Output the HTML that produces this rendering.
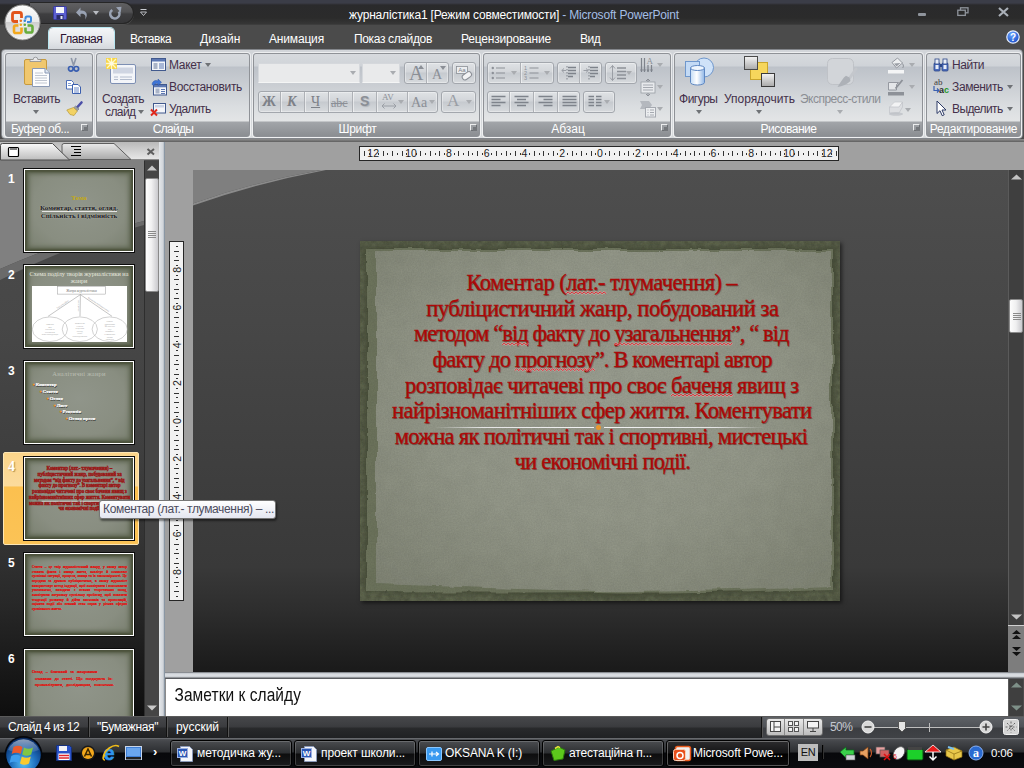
<!DOCTYPE html>
<html lang="ru"><head><meta charset="utf-8"><title>журналістика1 - Microsoft PowerPoint</title>
<style>
*{box-sizing:border-box;margin:0;padding:0}
html,body{width:1024px;height:768px;overflow:hidden;background:#4b4b4b;font-family:"Liberation Sans","DejaVu Sans",sans-serif;font-size:12px;color:#222}
.a{position:absolute}
svg{position:absolute;overflow:visible}
#app{position:absolute;left:0;top:0;width:1024px;height:768px;overflow:hidden;background:#4b4b4b}
/* title bar */
#tb{left:0;top:0;width:1024px;height:25px;background:linear-gradient(#3b3d48 0,#3b3d48 3px,#2a2a2c 5px,#2b2b2b 18px,#363636 24px,#444 25px)}
#qat{left:30px;top:2px;width:104px;height:22px;border-radius:0 11px 11px 0;background:linear-gradient(#606062,#525254 45%,#3e3e40 55%,#363638);border:1px solid #262626;border-left:none;box-shadow:0 1px 0 #4e4e4e}
#tabs{left:0;top:25px;width:1024px;height:24px;background:#4b4b4b}
.tab{position:absolute;top:32px;color:#fff;font-size:12px;line-height:15px;white-space:nowrap;letter-spacing:-.35px}
#tabA{left:49px;top:28px;width:65px;height:22px;border-radius:4px 4px 0 0;background:linear-gradient(#f4f6f8,#e4e7ea 60%,#d2d6db);box-shadow:0 0 0 1px #b7e6f0}
#title{left:349px;top:7.500px;color:#fff;font-size:12px;line-height:15px;white-space:nowrap;letter-spacing:-.18px}
/* ribbon */
#rb{left:1px;top:49px;width:1022px;height:90px;border-radius:4px;background:linear-gradient(#d3d6da,#c3c7cd 22%,#cfd3d7 60%,#d9dcde);border:1px solid #83868b}
.grp{position:absolute;top:53px;height:84px;border:1px solid #8f9297;border-radius:3px;background:linear-gradient(#d7dade 0,#cfd3d8 12px,#bdc2c9 13px,#c9cdd2 30px,#dadde0 52px,#e3e5e6 67px,#a2a5a9 68px,#8b8e92 100%);box-shadow:0 0 0 1px rgba(255,255,255,.6)}
.gl{position:absolute;left:0;right:0;bottom:0;height:15px;text-align:center;color:#fff;font-size:12px;line-height:16.5px;white-space:nowrap;letter-spacing:-.2px}
.rt{position:absolute;font-size:12px;color:#44304a;white-space:nowrap;line-height:14px;letter-spacing:-.25px}
.dis{color:#8b8e94}
.dd{position:absolute;width:0;height:0;border:3px solid transparent;border-top:4px solid #6f7276;border-bottom:none}
.ddl{border-top-color:#a9acb0}
.bt{position:absolute;border:1px solid #a3a7ad;border-radius:3px;background:linear-gradient(#dfe2e5,#d2d5d9 45%,#c6cacf 50%,#d7dadd);box-shadow:0 0 0 1px rgba(255,255,255,.35) inset}
.sep{position:absolute;width:1px;background:#aeb1b6;box-shadow:1px 0 0 rgba(255,255,255,.5)}
.ln{position:absolute;width:7px;height:7px;border:1px solid #eceded;border-right-color:#6d7074;border-bottom-color:#6d7074}
.ln:after{content:"";position:absolute;left:2px;top:2px;width:4px;height:4px;background:#74777b}
/* below ribbon */
#gap{left:0;top:139px;width:1024px;height:3px;background:linear-gradient(#8e8e8e,#5f5f5f)}
#main{left:165px;top:142px;width:859px;height:536px;background:#a0a0a0}
</style></head><body><div id="app">
<!--TITLE-->
<div class="a" id="tb"></div>
<div class="a" id="qat"></div>
<div class="a" id="tabs"></div>
<div class="a" id="title">журналістика1 [Режим совместимости] <span style="color:#a4bfe6">- Microsoft PowerPoint</span></div>
<div class="a" id="tabA"></div>
<div class="tab" style="left:60px;color:#2a1230;letter-spacing:-0.5px">Главная</div>
<div class="tab" style="left:130px;letter-spacing:-0.5px">Вставка</div>
<div class="tab" style="left:200px;letter-spacing:0px">Дизайн</div>
<div class="tab" style="left:269px;letter-spacing:-0.17px">Анимация</div>
<div class="tab" style="left:354px;letter-spacing:-0.36px">Показ слайдов</div>
<div class="tab" style="left:461px;letter-spacing:-0.19px">Рецензирование</div>
<div class="tab" style="left:580px;letter-spacing:-0.5px">Вид</div>
<!-- office button -->
<svg style="left:3px;top:3px" width="40" height="40" viewBox="0 0 40 40">
<defs><radialGradient id="ob" cx=".5" cy=".3" r=".75"><stop offset="0" stop-color="#ffffff"/><stop offset=".55" stop-color="#e8e8e8"/><stop offset="1" stop-color="#a8a8a8"/></radialGradient>
<linearGradient id="ob2" x1="0" y1="0" x2="0" y2="1"><stop offset="0" stop-color="#fdfdfd"/><stop offset=".48" stop-color="#e9e9e9"/><stop offset=".5" stop-color="#cfcfcf"/><stop offset="1" stop-color="#f4f4f4"/></linearGradient></defs>
<circle cx="19.500" cy="19.500" r="18.500" fill="#3a3a3a"/>
<circle cx="19.500" cy="19.500" r="17.500" fill="url(#ob2)" stroke="#8c8c8c" stroke-width="1"/>
<g fill="none" stroke-linejoin="round">
<rect x="9.500" y="9.500" width="9" height="9" rx="2" stroke="#e2541a" stroke-width="2.800"/>
<rect x="22.500" y="13.500" width="5.500" height="5.500" rx="1.500" stroke="#3c8ade" stroke-width="2"/>
<rect x="11" y="22.500" width="7.500" height="7.500" rx="1.800" stroke="#f2a81e" stroke-width="2.600"/>
<rect x="22.500" y="22.500" width="7" height="7" rx="1.800" stroke="#66ac3c" stroke-width="2.600"/>
</g>
<rect x="15" y="15" width="5" height="5" fill="#f0f0f0"/><rect x="20.500" y="16.500" width="3.500" height="4" fill="#eee"/><rect x="15.500" y="20.500" width="4.500" height="4" fill="#eee"/><rect x="20.500" y="20.500" width="4" height="4" fill="#eee"/>
<circle cx="17.800" cy="17.800" r="1.300" fill="#e8741f"/><circle cx="21.800" cy="17.800" r="1.300" fill="#3a86d8"/><circle cx="17.800" cy="21.800" r="1.300" fill="#f0a21c"/><circle cx="21.800" cy="21.800" r="1.300" fill="#62a83a"/>
</svg>
<!-- QAT icons -->
<svg style="left:53px;top:6px" width="14" height="14" viewBox="0 0 14 14"><rect x=".5" y=".5" width="13" height="13" rx="1" fill="#5b5ed0" stroke="#3a3c9c"/><rect x="3" y="1" width="8" height="6" fill="#f4f6fb"/><rect x="3.500" y="9" width="7" height="4.500" fill="#2a2c6a"/><rect x="7.500" y="10" width="2" height="3" fill="#e9ebf5"/></svg>
<svg style="left:75px;top:6px" width="15" height="14" viewBox="0 0 15 14"><path d="M1 6.500L5.500 1.500v3.200c5.500-.8 8.500 4 4.500 9 1.500-4-.5-6.500-4.500-5.700v3z" fill="#9aa3b4"/></svg>
<div class="dd" style="left:93px;top:11px;border-top-color:#b9bcc2"></div>
<svg style="left:108px;top:6px" width="14" height="14" viewBox="0 0 14 14"><path d="M10.800 5.500a4.600 4.600 0 1 1-6.500-1.500" stroke="#9aa3b4" stroke-width="2.600" fill="none"/><path d="M8 1.200l5.500-.5-.8 5.800z" fill="#9aa3b4"/></svg>
<svg style="left:140px;top:9px" width="7" height="8" viewBox="0 0 7 8"><path d="M.5.500h6" stroke="#c8cbd0"/><path d="M.5 3h6L3.500 6.500z" fill="none" stroke="#c8cbd0" stroke-width=".9"/></svg>
<!-- window controls -->
<div class="a" style="left:918px;top:13px;width:8px;height:3px;background:#8f949c;border-radius:1px"></div>
<svg style="left:957px;top:7px" width="12" height="10" viewBox="0 0 12 10"><rect x="3.500" y=".8" width="7.500" height="5" fill="none" stroke="#8f949c" stroke-width="1.300"/><rect x=".8" y="3.200" width="7.500" height="5.200" fill="#2b2b2b" stroke="#8f949c" stroke-width="1.300"/></svg>
<svg style="left:998px;top:7px" width="11" height="10" viewBox="0 0 11 10"><path d="M1 1l9 8M10 1L1 9" stroke="#aab0b8" stroke-width="2.200"/></svg>
<!-- help -->
<svg style="left:1005px;top:29px" width="16" height="16" viewBox="0 0 16 16"><defs><radialGradient id="hp" cx=".4" cy=".3" r=".8"><stop offset="0" stop-color="#6aa6ff"/><stop offset="1" stop-color="#1244c2"/></radialGradient></defs><circle cx="8" cy="8" r="6.200" fill="url(#hp)" stroke="#e6eefc" stroke-width="1.200"/><text x="8" y="11.500" text-anchor="middle" font-family="Liberation Sans,sans-serif" font-weight="bold" font-size="10" fill="#fff">?</text></svg>
<!--/TITLE2-->
<div class="a" id="rb"></div>
<!--RIBBON-->
<!-- group 1: clipboard -->
<div class="grp" style="left:5px;width:88px"><div class="gl" style="text-align:left;padding-left:5px;letter-spacing:-0.5px">Буфер об...</div><div class="ln" style="left:75px;top:70px"></div></div>
<svg style="left:23px;top:56px" width="30" height="34" viewBox="0 0 30 34">
 <rect x="1.5" y="3.5" width="22" height="25" rx="1.5" fill="#f0c76e" stroke="#c69a3e"/>
 <path d="M7 5.5h11v-2h-3.2a2.3 2.300 0 0 0-4.600 0H7z" fill="#e8e8ea" stroke="#8a8d92" stroke-width=".8"/>
 <path d="M9.500 12.500h12.500l4.500 4.500v13.500h-17z" fill="#fdfdfe" stroke="#8a99b4"/>
 <path d="M22 12.500v4.500h4.500" fill="#dfe6f2" stroke="#8a99b4"/>
 <path d="M12 17h8M12 19.500h12M12 22h12M12 24.500h12M12 27h12" stroke="#b9c0cc" stroke-width=".9"/>
</svg>
<div class="rt" style="left:13px;top:92px;letter-spacing:-0.48px">Вставить</div><div class="dd" style="left:33px;top:110px"></div>
<svg style="left:67px;top:57px" width="13" height="16" viewBox="0 0 13 16"><path d="M4.200 1l2.600 8M9 1L6.300 9" stroke="#8e97a8" stroke-width="1.600" fill="none"/><circle cx="3.800" cy="11.800" r="2.300" fill="none" stroke="#3a5fb0" stroke-width="1.700"/><circle cx="9.300" cy="11.800" r="2.300" fill="none" stroke="#3a5fb0" stroke-width="1.700"/></svg>
<svg style="left:66px;top:80px" width="16" height="14" viewBox="0 0 16 14"><path d="M.5.500h5l2 2v6.500h-7z" fill="#fff" stroke="#4d6fb8"/><path d="M2 3.500h3M2 5.500h4" stroke="#7f9ad0"/><path d="M6.500 4.500h5.500l2.500 2.500v6.500h-8z" fill="#fff" stroke="#3b5fae"/><path d="M8 8h5M8 10h5M8 12h5" stroke="#6b89c8"/></svg>
<svg style="left:66px;top:101px" width="17" height="16" viewBox="0 0 17 16"><path d="M15.500 1.500l-4.500 5" stroke="#4b4fa8" stroke-width="2.600" stroke-linecap="round"/><path d="M9.500 5l3.500 3-1.800 1.800-3.500-3z" fill="#9aa0a8" stroke="#6e7279" stroke-width=".6"/><path d="M7.500 6.500l3.800 3.500-3.300 4.500-4-1L.800 9z" fill="#f2d264" stroke="#b89a38" stroke-width=".7"/></svg>
<!-- group 2: slides -->
<div class="grp" style="left:96px;width:154px"><div class="gl" style="letter-spacing:-0.7px">Слайды</div></div>
<svg style="left:105px;top:57px" width="33" height="30" viewBox="0 0 33 30">
 <rect x="5.500" y="7.500" width="25" height="19" rx="1.500" fill="#f3f5f9" stroke="#7d8fb3"/>
 <rect x="8" y="10.500" width="20" height="6" fill="#cfd5e2"/><path d="M9 20h4M15 20h12M9 22.500h4M15 22.500h12" stroke="#b3bccd"/>
 <rect x="1" y="1" width="11" height="11" fill="#f7d548"/><path d="M6.500 1v11M1 6.500h11M2 2l9 9M11 2l-9 9" stroke="#fff8c8" stroke-width="1.300"/><circle cx="6.500" cy="6.500" r="2" fill="#fffbe0"/>
</svg>
<div class="rt" style="left:102px;top:92px;letter-spacing:-0.5px">Создать</div><div class="rt" style="left:105px;top:105px;letter-spacing:-0.6px">слайд</div><div class="dd" style="left:138px;top:110px"></div>
<svg style="left:151px;top:58px" width="15" height="14" viewBox="0 0 15 14"><rect x=".5" y=".5" width="14" height="12" fill="#f4f6fa" stroke="#41598d"/><rect x="1" y="1" width="13" height="2.500" fill="#5d78b3"/><rect x="2.500" y="5" width="4" height="6" fill="#aab4c8"/><path d="M8 6h5M8 8h5M8 10h5" stroke="#5d78b3"/></svg>
<div class="rt" style="left:169px;top:58px;letter-spacing:-0.3px">Макет</div><div class="dd" style="left:205px;top:63px"></div>
<svg style="left:151px;top:78px" width="16" height="18" viewBox="0 0 16 18"><rect x="2.500" y="6.500" width="13" height="10.500" fill="#f4f6fa" stroke="#41598d"/><rect x="3" y="7" width="12" height="2.300" fill="#5d78b3"/><rect x="4.500" y="10.500" width="4" height="5" fill="#aab4c8"/><path d="M10 11.500h4M10 13.500h4M10 15.500h4" stroke="#5d78b3"/><path d="M1 6.500c.5-3.500 3.500-5 6-3.500V1l3.500 3.300L7 7.500V5.700C5 5 3.500 5.500 3 7.500z" fill="#3f74d6" stroke="#2a54a8" stroke-width=".5"/></svg>
<div class="rt" style="left:169px;top:80px;letter-spacing:-0.32px">Восстановить</div>
<svg style="left:150px;top:103px" width="16" height="14" viewBox="0 0 16 14"><rect x="3.500" y=".5" width="12" height="9.500" fill="#f4f6fa" stroke="#41598d"/><rect x="5" y="2" width="9" height="2.500" fill="#c9d2e4"/><path d="M1 6.500l6 6M7 6.500l-6 6" stroke="#e0281c" stroke-width="2"/></svg>
<div class="rt" style="left:169px;top:102px;letter-spacing:-0.6px">Удалить</div>
<!-- group 3: font -->
<div class="grp" style="left:253px;width:227px"><div class="gl" style="letter-spacing:-0.3px;padding-right:18px">Шрифт</div><div class="ln" style="left:216px;top:70px"></div></div>
<div class="a" style="left:258px;top:63px;width:102px;height:20px;background:#e9eaeb;border:1px solid #d5d8dc;border-bottom-color:#f4f5f5"></div><div class="dd ddl" style="left:350px;top:71px"></div>
<div class="a" style="left:362px;top:63px;width:38px;height:20px;background:#e9eaeb;border:1px solid #d5d8dc;border-bottom-color:#f4f5f5"></div><div class="dd ddl" style="left:390px;top:71px"></div>
<div class="bt" style="left:404px;top:62px;width:45px;height:22px"></div><div class="sep" style="left:426px;top:63px;height:20px"></div>
<div class="a" style="left:409px;top:62px;font:20px/22px 'Liberation Serif',serif;color:#8b8f96">A</div><div class="a" style="left:432px;top:66px;font:14px/18px 'Liberation Serif',serif;color:#8b8f96">A</div>
<div class="dd" style="left:418px;top:65px;border-top:none;border-bottom:4px solid #8b8f96"></div><div class="dd" style="left:440px;top:66px;border-top-color:#8b8f96"></div>
<div class="bt" style="left:452px;top:62px;width:24px;height:22px"></div>
<svg style="left:455px;top:65px" width="18" height="16" viewBox="0 0 18 16"><rect x="1.500" y="1.500" width="11" height="7" fill="#eceef0" stroke="#8b8f96" stroke-width=".8"/><text x="3.200" y="7.300" font-family="Liberation Sans,sans-serif" font-size="6" fill="#7d8188">Aa</text><rect x="7" y="8" width="10" height="5.500" rx="2.500" transform="rotate(-35 12 11)" fill="#f3f3f4" stroke="#8b8f96"/></svg>
<div class="bt" style="left:258px;top:91px;width:180px;height:22px"></div>
<div class="sep" style="left:280px;top:92px;height:20px"></div><div class="sep" style="left:304px;top:92px;height:20px"></div><div class="sep" style="left:328px;top:92px;height:20px"></div><div class="sep" style="left:352px;top:92px;height:20px"></div><div class="sep" style="left:376px;top:92px;height:20px"></div><div class="sep" style="left:407px;top:92px;height:20px"></div>
<div class="a" style="left:262px;top:93px;font:bold 14px/18px 'Liberation Serif',serif;color:#7d8188">Ж</div>
<div class="a" style="left:287px;top:93px;font:italic bold 14px/18px 'Liberation Serif',serif;color:#7d8188">К</div>
<div class="a" style="left:311px;top:93px;font:14px/18px 'Liberation Serif',serif;color:#7d8188;text-decoration:underline">Ч</div>
<div class="a" style="left:331px;top:94px;font:12px/18px 'Liberation Serif',serif;color:#8b8f96;text-decoration:line-through">abc</div>
<div class="a" style="left:360px;top:92px;font:bold 14px/18px 'Liberation Sans',sans-serif;color:#8b8f96;text-shadow:1px 1px 1px #b0b3b8">S</div>
<div class="a" style="left:382px;top:93px;font:9px/9px 'Liberation Serif',serif;color:#8b8f96">AV</div>
<svg style="left:381px;top:103px" width="16" height="6" viewBox="0 0 16 6"><path d="M1 3h14M3.500.5L1 3l2.500 2.500M12.500.5L15 3l-2.500 2.500" stroke="#9a9ea5" fill="none"/></svg><div class="dd ddl" style="left:398px;top:100px"></div>
<div class="a" style="left:411px;top:94px;font:14px/18px 'Liberation Serif',serif;color:#8b8f96">Aa</div><div class="dd ddl" style="left:429px;top:100px"></div>
<div class="bt" style="left:441px;top:91px;width:35px;height:22px"></div>
<div class="a" style="left:447px;top:90px;font:17px/22px 'Liberation Serif',serif;color:#9a9ea5">A</div><div class="dd ddl" style="left:466px;top:100px"></div>
<!-- group 4: paragraph -->
<div class="grp" style="left:483px;width:188px"><div class="gl" style="letter-spacing:-0.03px;padding-right:18px">Абзац</div><div class="ln" style="left:177px;top:70px"></div></div>
<div class="bt" style="left:487px;top:62px;width:67px;height:22px"></div><div class="sep" style="left:520px;top:63px;height:20px"></div>
<svg style="left:491px;top:66px" width="16" height="14" viewBox="0 0 16 14"><path d="M5 2h9M5 7h9M5 12h9" stroke="#8d9198" stroke-width="1.200"/><circle cx="1.800" cy="2" r="1.200" fill="#8d9198"/><circle cx="1.800" cy="7" r="1.200" fill="#8d9198"/><circle cx="1.800" cy="12" r="1.200" fill="#8d9198"/></svg><div class="dd ddl" style="left:511px;top:71px"></div>
<svg style="left:524px;top:65px" width="16" height="16" viewBox="0 0 16 16"><path d="M5.500 3h9M5.500 8h9M5.500 13h9" stroke="#8d9198" stroke-width="1.200"/><text x="0" y="5" font-size="5.500" font-family="Liberation Sans,sans-serif" fill="#8d9198">1</text><text x="0" y="10" font-size="5.500" font-family="Liberation Sans,sans-serif" fill="#8d9198">2</text><text x="0" y="15" font-size="5.500" font-family="Liberation Sans,sans-serif" fill="#8d9198">3</text></svg><div class="dd ddl" style="left:544px;top:71px"></div>
<div class="bt" style="left:557px;top:62px;width:45px;height:22px"></div><div class="sep" style="left:579px;top:63px;height:20px"></div>
<svg style="left:561px;top:65px" width="16" height="16" viewBox="0 0 16 16"><path d="M7 2.500h8M7 5.500h8M7 8.500h8M7 11.500h5" stroke="#7e838b" stroke-width="1.400"/><path d="M6 1v14" stroke="#7e838b" stroke-dasharray="1.500 1.500"/><path d="M5 5.500H.8M3 3.500L.8 5.500 3 7.500" stroke="#9a9ea5" fill="none"/></svg>
<svg style="left:583px;top:65px" width="16" height="16" viewBox="0 0 16 16"><path d="M7 2.500h8M7 5.500h8M7 8.500h8M7 11.500h5" stroke="#7e838b" stroke-width="1.400"/><path d="M6 1v14" stroke="#7e838b" stroke-dasharray="1.500 1.500"/><path d="M.5 5.500H5M3 3.500l2.200 2L3 7.500" stroke="#9a9ea5" fill="none"/></svg>
<div class="bt" style="left:605px;top:62px;width:32px;height:22px"></div>
<svg style="left:609px;top:64px" width="18" height="18" viewBox="0 0 18 18"><path d="M8 4h9M8 7.500h9M8 11h9M8 14.500h9" stroke="#8d9198" stroke-width="1.300"/><path d="M3.500 1.500v15M1 4.500l2.500-3 2.500 3M1 13.500l2.500 3 2.500-3" stroke="#9a9ea5" fill="none"/></svg><div class="dd ddl" style="left:626px;top:71px"></div>
<div class="bt" style="left:487px;top:91px;width:93px;height:22px"></div><div class="sep" style="left:509px;top:92px;height:20px"></div><div class="sep" style="left:533px;top:92px;height:20px"></div><div class="sep" style="left:557px;top:92px;height:20px"></div>
<svg style="left:491px;top:95px" width="15" height="14" viewBox="0 0 15 14"><path d="M.5 1.500h14M.5 4.500h9M.5 7.500h14M.5 10.500h9" stroke="#7e838b" stroke-width="1.300"/></svg>
<svg style="left:514px;top:95px" width="15" height="14" viewBox="0 0 15 14"><path d="M.5 1.500h14M3 4.500h9M.5 7.500h14M3 10.500h9" stroke="#7e838b" stroke-width="1.300"/></svg>
<svg style="left:538px;top:95px" width="15" height="14" viewBox="0 0 15 14"><path d="M.5 1.500h14M5.500 4.500h9M.5 7.500h14M5.500 10.500h9" stroke="#7e838b" stroke-width="1.300"/></svg>
<svg style="left:562px;top:95px" width="15" height="14" viewBox="0 0 15 14"><path d="M.5 1.500h14M.5 4.500h14M.5 7.500h14M.5 10.500h14" stroke="#7e838b" stroke-width="1.300"/></svg>
<div class="bt" style="left:583px;top:91px;width:32px;height:22px"></div>
<svg style="left:588px;top:95px" width="14" height="14" viewBox="0 0 14 14"><path d="M.5 1.500h5.500M8 1.500h5.500M.5 4.500h5.500M8 4.500h5.500M.5 7.500h5.500M8 7.500h5.500M.5 10.500h5.500M8 10.500h5.500" stroke="#7e838b" stroke-width="1.300"/></svg><div class="dd ddl" style="left:604px;top:100px"></div>
<svg style="left:640px;top:56px" width="16" height="18" viewBox="0 0 16 18"><path d="M1.500 2v14M4.500 2v14M8 9v7M11.500 9v7" stroke="#7e838b" stroke-width="1.200"/><path d="M0 13.500l1.500 2.500L3 13.500zM3 13.500l1.500 2.500L6 13.500zM6.500 13.500L8 16l1.500-2.500zM10 13.500l1.500 2.500 1.500-2.500z" fill="#7e838b"/><text x="6.500" y="8" font-size="9" font-family="Liberation Serif,serif" fill="#8d9198">A</text></svg><div class="dd ddl" style="left:657px;top:63px"></div>
<svg style="left:640px;top:79px" width="16" height="17" viewBox="0 0 16 17"><rect x="1" y="3" width="14" height="11" fill="#e7e9ec" stroke="#9a9ea5" stroke-width=".8"/><path d="M3 6h10M3 8.500h10M3 11h10" stroke="#a5a9b0"/><path d="M8 0v3M6 2l2-2 2 2M8 17v-3M6 15l2 2 2-2" stroke="#8d9198" fill="none"/></svg><div class="dd ddl" style="left:657px;top:85px"></div>
<svg style="left:640px;top:101px" width="17" height="17" viewBox="0 0 17 17"><path d="M0 0h9l3 4-3 4H0l2-4z" fill="#b4b8be"/><rect x="5.500" y="6.500" width="10" height="9.500" fill="#eceef0" stroke="#a5a9b0"/><path d="M7.500 9h1M10 9h4M7.500 11.500h1M10 11.500h4M7.500 14h1M10 14h4" stroke="#a5a9b0"/></svg><div class="dd ddl" style="left:657px;top:107px"></div>
<!-- group 5: drawing -->
<div class="grp" style="left:674px;width:249px"><div class="gl" style="padding-right:20px;letter-spacing:-0.49px">Рисование</div><div class="ln" style="left:238px;top:70px"></div></div>
<svg style="left:684px;top:57px" width="31" height="30" viewBox="0 0 31 30"><defs><linearGradient id="cy" x1="0" x2="1"><stop offset="0" stop-color="#c4dcf6"/><stop offset=".45" stop-color="#fff"/><stop offset="1" stop-color="#8fb6e6"/></linearGradient></defs><circle cx="20" cy="10.500" r="9.500" fill="#cfe2f8" stroke="#6f97cc"/><rect x="1.500" y="4.500" width="14" height="15" fill="#c3daf5" stroke="#6f97cc"/><path d="M6.500 11v14.500a7 2.500 0 0 0 14 0V11z" fill="url(#cy)" stroke="#5f88c2"/><ellipse cx="13.500" cy="11" rx="7" ry="2.500" fill="#eef5fd" stroke="#5f88c2"/></svg>
<div class="rt" style="left:679px;top:92px;letter-spacing:-0.48px">Фигуры</div><div class="dd" style="left:696px;top:110px"></div>
<svg style="left:744px;top:56px" width="31" height="32" viewBox="0 0 31 32"><defs><linearGradient id="gq" x1="0" y1="0" x2="0" y2="1"><stop offset="0" stop-color="#f4f4f4"/><stop offset="1" stop-color="#a9a9a9"/></linearGradient></defs><rect x="6.500" y="6.500" width="17" height="17" fill="#f6d65c" stroke="#c9a52d"/><rect x=".5" y=".5" width="13" height="13" fill="url(#gq)" stroke="#4a4a4a"/><rect x="17.500" y="17.500" width="13" height="13" fill="url(#gq)" stroke="#3a3a3a"/></svg>
<div class="rt" style="left:724px;top:92px;letter-spacing:-0.04px">Упорядочить</div><div class="dd" style="left:756px;top:110px"></div>
<svg style="left:827px;top:58px" width="31" height="31" viewBox="0 0 31 31"><rect x=".5" y=".5" width="26" height="26" rx="5" fill="#d2d5d9" stroke="#bfc2c7"/><path d="M29 11L22 21" stroke="#c4c7cc" stroke-width="3" stroke-linecap="round"/><path d="M22.500 19.500l-3.500-1.800c-3 2-5 6-8.500 11.300 5-1 9.500-2.500 13-6z" fill="#adb1b7"/></svg>
<div class="rt dis" style="left:800px;top:92px;letter-spacing:-0.52px">Экспресс-стили</div><div class="dd ddl" style="left:837px;top:110px"></div>
<svg style="left:888px;top:57px" width="17" height="17" viewBox="0 0 17 17"><path d="M4 5.500L9.500 1l5 5-6 5z" fill="#eceef0" stroke="#8d9198" stroke-width=".9"/><path d="M6 6.500l6.500-.5-4 3.500z" fill="#9a9ea5"/><path d="M14.500 6.500c1.200 2 1.200 3.500 0 4.500" stroke="#8d9198" fill="none"/><rect x="0" y="13" width="16" height="3.500" fill="#f4f5f6"/></svg><div class="dd ddl" style="left:909px;top:63px"></div>
<svg style="left:888px;top:79px" width="17" height="17" viewBox="0 0 17 17"><path d="M.5 3.500h10l-2 2v5.500h-8z" fill="#e4e6e9" stroke="#8d9198" stroke-width=".9"/><path d="M14.500 1l-7 8.500" stroke="#8d9198" stroke-width="1.800"/><rect x="0" y="13" width="16" height="3.500" fill="#8d9198"/></svg><div class="dd ddl" style="left:909px;top:85px"></div>
<svg style="left:888px;top:100px" width="17" height="16" viewBox="0 0 17 16"><path d="M1.500 7l5-5h8l-3.500 6z" fill="#f2f3f4" stroke="#c4c7cc" stroke-width=".7"/><path d="M1.500 7h9.500l3.500-5v5l-3.500 6H1.500z" fill="#dcdee1" stroke="#c0c3c8" stroke-width=".7"/><ellipse cx="8" cy="14" rx="7" ry="1.800" fill="#b4b8be" opacity=".6"/></svg><div class="dd ddl" style="left:905px;top:108px"></div>
<!-- group 6: editing -->
<div class="grp" style="left:926px;width:95px"><div class="gl" style=";letter-spacing:-0.28px">Редактирование</div></div>
<svg style="left:933px;top:58px" width="16" height="14" viewBox="0 0 16 14"><rect x="1" y="5" width="6" height="8" rx="1" fill="#4c6dbd" stroke="#2c4688" stroke-width=".8"/><rect x="9" y="5" width="6" height="8" rx="1" fill="#4c6dbd" stroke="#2c4688" stroke-width=".8"/><rect x="2" y="1" width="4" height="5" fill="#e8edf7" stroke="#2c4688" stroke-width=".8"/><rect x="10" y="1" width="4" height="5" fill="#e8edf7" stroke="#2c4688" stroke-width=".8"/><rect x="2.500" y="7" width="3" height="4" fill="#e8edf7"/><rect x="10.500" y="7" width="3" height="4" fill="#e8edf7"/><rect x="7" y="6" width="2" height="3" fill="#2c4688"/></svg>
<div class="rt" style="left:952px;top:58px;letter-spacing:-0.45px">Найти</div>
<div class="a" style="left:934px;top:78px;font:9px/9px 'Liberation Serif',serif;color:#3b3b3b">ab</div><div class="a" style="left:939px;top:86px;font:bold 9px/9px 'Liberation Sans',sans-serif;color:#2a2a2a">a<span style="color:#1f9a2a">c</span></div>
<svg style="left:933px;top:86px" width="7" height="8" viewBox="0 0 7 8"><path d="M1 0v4.500h5M4 2.500l2 2-2 2" stroke="#3a5fb0" fill="none" stroke-width="1.200"/></svg>
<div class="rt" style="left:952px;top:80px;letter-spacing:-0.37px">Заменить</div><div class="dd" style="left:1007px;top:85px"></div>
<svg style="left:936px;top:100px" width="11" height="17" viewBox="0 0 11 17"><path d="M1 1v12.500l3-2.800 2.200 5 2-.9-2.200-4.800H10z" fill="#fff" stroke="#2c3a66" stroke-width="1"/></svg>
<div class="rt" style="left:952px;top:102px;letter-spacing:-0.6px">Выделить</div><div class="dd" style="left:1007px;top:107px"></div>
<!--/RIBBON-->
<div class="a" id="gap"></div>
<div class="a" id="main"></div>
<!--LEFT-->
<style>
#lp{left:0;top:160px;width:159px;height:556px;background:linear-gradient(#4c4c4c 0,#474747 30%,#3f3f3f 52%,#333 69%,#292929 79%,#1d1d1d 88%,#0e0e0e 100%);overflow:hidden}
#lph{left:0;top:142px;width:159px;height:18px;background:linear-gradient(#b9b9b9,#d9d9d9 70%,#e6e6e6);border-bottom:1px solid #8a8a8a}
.th{position:absolute;left:23px;width:112px;height:85px;border:1px solid #0c0c0c;background:#fff;padding:1px}
.th>div{position:relative;width:108px;height:81px;overflow:hidden;background:radial-gradient(ellipse at 50% 45%,#90958a 0,#898e81 60%,#787e6e 100%);box-shadow:inset 0 0 2px 2px #4b523b,inset 0 0 4px 4px #5e6550}
.tn{position:absolute;left:8px;color:#fff;font-weight:bold;font-size:12px;line-height:14px}
.tt{position:absolute;left:0;width:108px;text-align:center;white-space:nowrap;font-family:"Liberation Serif",serif}
#lsb{left:144px;top:161px;width:15px;height:555px;background:#454545;border-left:1px solid #2e2e2e}
#spl{left:159px;top:142px;width:6px;height:574px;background:linear-gradient(90deg,#e4e7ea,#d0d4d9 70%,#6f7f8f)}
.s4{-webkit-text-stroke:1.600px #9a1414!important;color:#9a1414!important;text-shadow:none!important}
</style>
<div class="a" id="lp">
<svg style="left:0;top:0" width="144" height="130" viewBox="0 0 144 130"><path d="M0 0h144v61Q70 78 0 109z" fill="#808080"/><path d="M0 109Q70 78 144 61v4Q72 84 0 120z" fill="#6a6a6a"/></svg>
</div>
<div class="a" id="lph"></div>
<svg style="left:0;top:142px" width="159" height="18" viewBox="0 0 159 18">
<defs><linearGradient id="pt" x1="0" y1="0" x2="0" y2="1"><stop offset="0" stop-color="#fafafa"/><stop offset="1" stop-color="#bdbdbd"/></linearGradient><linearGradient id="pt2" x1="0" y1="0" x2="0" y2="1"><stop offset="0" stop-color="#e9e9e9"/><stop offset="1" stop-color="#a9a9a9"/></linearGradient></defs>
<path d="M62 17.500V3.500q0-2 2-2h50l17 16z" fill="url(#pt2)" stroke="#5e5e5e"/>
<path d="M.5 18V3.500q0-2 2-2h50l17 16.500z" fill="url(#pt)" stroke="#4a4a4a"/>
<rect x="8.500" y="5.500" width="10" height="9" rx="1" fill="#fff" stroke="#000" stroke-width="1.200"/><path d="M10 7h7" stroke="#000"/>
<path d="M71 4.500h10M74 7.500h7M74 10.500h7M71 13.500h10" stroke="#000" stroke-width="1.200"/>
<path d="M147.500 7l6.500 5.500M154 7l-6.500 5.500" stroke="#5e5e5e" stroke-width="2"/>
</svg>
<!-- selected highlight -->
<div class="a" style="left:3px;top:452px;width:136px;height:93px;border-radius:2px;background:linear-gradient(#fcd58a,#fbdb9c 36%,#fbc04f 37.500%,#fbc356 100%);border:1px solid #fde6b4"></div>
<div class="tn" style="top:172px">1</div><div class="tn" style="top:268px">2</div><div class="tn" style="top:364px">3</div><div class="tn" style="top:459px;font:bold 14px/15px 'Liberation Serif',serif;text-shadow:1px 1px 1px rgba(120,80,0,.5)">4</div><div class="tn" style="top:556px">5</div><div class="tn" style="top:652px">6</div>
<div class="th" style="top:168px"><div>
 <div class="tt" style="top:24px;font-size:7px;line-height:8px;font-weight:bold;color:#c4aa14">Тема</div>
 <div class="tt" style="top:33.500px;font-size:7px;line-height:8px;font-weight:bold;color:#161616;text-shadow:0 0 1px #d8d8d8">Коментар, стаття, огляд.</div>
 <div class="a" style="left:17px;top:41px;width:75px;height:1px;background:#e4e4e4"></div>
 <div class="tt" style="top:42px;font-size:7px;line-height:8px;font-weight:bold;color:#161616;text-shadow:0 0 1px #d8d8d8">Спільність і відмінність</div>
</div></div>
<div class="th" style="top:264px"><div>
 <div class="tt" style="top:4px;font-size:6.200px;line-height:8px;color:#e6e8de">Схема поділу творів журналістики на</div>
 <div class="tt" style="top:11px;font-size:6.200px;line-height:8px;color:#e6e8de">жанри</div>
 <div class="a" style="left:7px;top:20px;width:95px;height:56px;background:#fff"></div>
 <svg style="left:7px;top:20px" width="95" height="56" viewBox="0 0 95 56"><rect x="25.300" y=".6" width="48.300" height="7.500" fill="none" stroke="#9a9a9a" stroke-width=".5"/><text x="49.500" y="5.600" font-size="3.400" text-anchor="middle" fill="#777" font-family="Liberation Serif,serif">Жанри журналістики</text><path d="M48.400 8.600L16.100 30.300M48.400 8.600L48 30.300M48.400 8.600L80 30.300" stroke="#8a8a8a" stroke-width=".5"/><ellipse cx="17.900" cy="43.200" rx="17.600" ry="12.300" fill="none" stroke="#a4a4a4" stroke-width=".5"/><ellipse cx="47.800" cy="43.200" rx="17.600" ry="12.300" fill="none" stroke="#a4a4a4" stroke-width=".5"/><ellipse cx="77.700" cy="43.200" rx="17.600" ry="12.300" fill="none" stroke="#a4a4a4" stroke-width=".5"/>
 <text transform="translate(31 19) rotate(-34)" font-size="2.400" text-anchor="middle" fill="#999" font-family="Liberation Serif,serif">Інформаційні</text><text transform="translate(46.500 20) rotate(-90)" font-size="2.400" text-anchor="middle" fill="#999" font-family="Liberation Serif,serif">Аналітичні</text><text transform="translate(66 19) rotate(34)" font-size="2.400" text-anchor="middle" fill="#999" font-family="Liberation Serif,serif">Художньо-публіцистичні</text>
 <text x="17.9" y="39.0" font-size="2.400" text-anchor="middle" fill="#999" font-family="Liberation Serif,serif">Замітка</text><text x="17.9" y="41.6" font-size="2.400" text-anchor="middle" fill="#999" font-family="Liberation Serif,serif">Звіт</text><text x="17.9" y="44.2" font-size="2.400" text-anchor="middle" fill="#999" font-family="Liberation Serif,serif">Інтерв’ю</text><text x="17.9" y="46.8" font-size="2.400" text-anchor="middle" fill="#999" font-family="Liberation Serif,serif">Репортаж</text><text x="17.9" y="49.4" font-size="2.400" text-anchor="middle" fill="#999" font-family="Liberation Serif,serif">Кореспонденція</text><text x="47.8" y="38.0" font-size="2.400" text-anchor="middle" fill="#999" font-family="Liberation Serif,serif">Коментар</text><text x="47.8" y="40.6" font-size="2.400" text-anchor="middle" fill="#999" font-family="Liberation Serif,serif">Стаття</text><text x="47.8" y="43.2" font-size="2.400" text-anchor="middle" fill="#999" font-family="Liberation Serif,serif">Рецензія</text><text x="47.8" y="45.8" font-size="2.400" text-anchor="middle" fill="#999" font-family="Liberation Serif,serif">Огляд</text><text x="47.8" y="48.4" font-size="2.400" text-anchor="middle" fill="#999" font-family="Liberation Serif,serif">Лист</text><text x="47.8" y="51.0" font-size="2.400" text-anchor="middle" fill="#999" font-family="Liberation Serif,serif">Розслідування</text><text x="77.7" y="36.0" font-size="2.400" text-anchor="middle" fill="#999" font-family="Liberation Serif,serif">Нарис</text><text x="77.7" y="38.6" font-size="2.400" text-anchor="middle" fill="#999" font-family="Liberation Serif,serif">Зарисовка</text><text x="77.7" y="41.2" font-size="2.400" text-anchor="middle" fill="#999" font-family="Liberation Serif,serif">Фейлетон</text><text x="77.7" y="43.8" font-size="2.400" text-anchor="middle" fill="#999" font-family="Liberation Serif,serif">Есе</text><text x="77.7" y="46.4" font-size="2.400" text-anchor="middle" fill="#999" font-family="Liberation Serif,serif">Памфлет</text><text x="77.7" y="49.0" font-size="2.400" text-anchor="middle" fill="#999" font-family="Liberation Serif,serif">Гумореска</text><text x="77.7" y="51.6" font-size="2.400" text-anchor="middle" fill="#999" font-family="Liberation Serif,serif">Байка</text><text x="77.7" y="54.2" font-size="2.400" text-anchor="middle" fill="#999" font-family="Liberation Serif,serif">Пародія</text>
 </svg>
</div></div>
<div class="th" style="top:360px"><div>
 <div class="tt" style="top:8px;font-size:6.500px;color:#b9bdb1;letter-spacing:.2px">Аналітичні жанри</div>
 <div class="a" style="left:8px;top:20px;font:bold 4.700px/5px 'Liberation Serif',serif;color:#fff;-webkit-text-stroke:.2px #fff;text-shadow:.5px .5px .5px #333;white-space:nowrap"><span style="color:#f0962a;-webkit-text-stroke:.5px #f0962a">▪</span>&nbsp;Коментар</div>
 <div class="a" style="left:15px;top:27px;font:bold 4.700px/5px 'Liberation Serif',serif;color:#fff;-webkit-text-stroke:.2px #fff;text-shadow:.5px .5px .5px #333;white-space:nowrap"><span style="color:#f0962a;-webkit-text-stroke:.5px #f0962a">▪</span>&nbsp;Стаття</div>
 <div class="a" style="left:22px;top:34px;font:bold 4.700px/5px 'Liberation Serif',serif;color:#fff;-webkit-text-stroke:.2px #fff;text-shadow:.5px .5px .5px #333;white-space:nowrap"><span style="color:#f0962a;-webkit-text-stroke:.5px #f0962a">▪</span>&nbsp;Огляд</div>
 <div class="a" style="left:29px;top:41px;font:bold 4.700px/5px 'Liberation Serif',serif;color:#fff;-webkit-text-stroke:.2px #fff;text-shadow:.5px .5px .5px #333;white-space:nowrap"><span style="color:#f0962a;-webkit-text-stroke:.5px #f0962a">▪</span>&nbsp;Лист</div>
 <div class="a" style="left:35px;top:47px;font:bold 4.700px/5px 'Liberation Serif',serif;color:#fff;-webkit-text-stroke:.2px #fff;text-shadow:.5px .5px .5px #333;white-space:nowrap"><span style="color:#f0962a;-webkit-text-stroke:.5px #f0962a">▪</span>&nbsp;Рецензія</div>
 <div class="a" style="left:41px;top:54px;font:bold 4.700px/5px 'Liberation Serif',serif;color:#fff;-webkit-text-stroke:.2px #fff;text-shadow:.5px .5px .5px #333;white-space:nowrap"><span style="color:#f0962a;-webkit-text-stroke:.5px #f0962a">▪</span>&nbsp;Огляд преси</div>
</div></div>
<div class="th" style="top:456px"><div>
<div class="a" style="left:0;top:0;width:480px;height:360px;transform:translateY(1px) scale(.225);transform-origin:0 0;font-weight:bold">
<div class="sl s4" style="left:6.6px;width:470.4px;top:29.2px;letter-spacing:-0.596px">Коментар (<span>лат.-</span> тлумачення) –</div>
<div class="sl s4" style="left:-33.8px;width:552.3px;top:54.8px;letter-spacing:-0.444px">публіцистичний жанр, побудований за</div>
<div class="sl s4" style="left:-46.0px;width:574.5px;top:80.4px;letter-spacing:-0.918px">методом “<span>від</span> факту до <span>узагальнення</span>”, “ від</div>
<div class="sl s4" style="left:-27.4px;width:539.1px;top:106.0px;letter-spacing:-0.853px">факту до <span>прогнозу</span>”. В коментарі автор</div>
<div class="sl s4" style="left:-55.0px;width:593.6px;top:131.6px;letter-spacing:-0.546px">розповідає читачеві про своє <span>баченя</span> явищ з</div>
<div class="sl s4" style="left:-68.0px;width:619.6px;top:157.2px;letter-spacing:-0.574px">найрізноманітніших сфер життя. Коментувати</div>
<div class="sl s4" style="left:-65.3px;width:612.7px;top:182.8px;letter-spacing:-0.673px">можна як політичні так і спортивні, мистецькі</div>
<div class="sl s4" style="left:54.6px;width:375.4px;top:208.4px;letter-spacing:-0.769px">чи економічні події.</div>
<div class="a" style="left:74px;top:186px;width:160px;height:3px;background:#e8e8e8"></div><div class="a" style="left:244px;top:186px;width:160px;height:3px;background:#e8e8e8"></div></div>
</div></div>
<div class="th" style="top:552px"><div>
 <div class="tt" style="top:11px;font:3.700px/4.650px 'Liberation Serif',serif;color:#e40808;-webkit-text-stroke:.22px #e40808;white-space:normal;left:7px;width:95px;text-align:justify">Стаття – це твір журналістський жанру, у якому автор ставить факти і явища життя, аналізує й осмислює суспільні ситуації, процеси, явища та їх закономірності. Це передача за думкою публіцистична, в якому журналіст використовує метод індукції, щоб аналізувати і пояснювати узагальнено, виходячи з певних теоретичних засад, аналізуючи актуальну суспільну проблему, щоб показати тенденції розвитку й дійти висновків та пропозицій, оцінити події або певний стан справ у різних сферах суспільного життя.</div>
</div></div>
<div class="th" style="top:648px"><div>
 <div class="tt" style="top:19px;font:4.200px/6.600px 'Liberation Serif',serif;color:#e40808;-webkit-text-stroke:.22px #e40808;white-space:nowrap;left:7px;width:100px;text-align:left;word-spacing:2px">Огляд – близький за жанровими<br>&nbsp;ознаками до статті. Що поєднують їх:<br>&nbsp;проаналізувати, дослідницька, пояснення.</div>
</div></div>
<!-- left scrollbar -->
<div class="a" id="lsb"></div>
<div class="a" style="left:145px;top:178px;width:14px;height:114px;border-radius:2px;background:linear-gradient(90deg,#fdfdfd,#f1f1f2 45%,#c9c9cd);border:1px solid #8a8a8a"></div>
<svg style="left:148px;top:231px" width="8" height="9" viewBox="0 0 8 9"><path d="M0 .5h8M0 2.500h8M0 4.500h8M0 6.500h8" stroke="#8a8a8a"/></svg>
<svg style="left:147px;top:165px" width="10" height="6" viewBox="0 0 10 6"><path d="M0 5.500L5 .5l5 5z" fill="#c9c9c9"/></svg>
<svg style="left:147px;top:705px" width="10" height="6" viewBox="0 0 10 6"><path d="M0 .5L5 5.500l5-5z" fill="#c9c9c9"/></svg>
<div class="a" id="spl"></div>
<!--/LEFT-->
<!--WORK-->
<div class="a" style="left:359px;top:146px;width:480px;height:15px;background:#f2f2f2;border:1px solid #262626"></div>
<svg style="left:360px;top:146px" width="479" height="15" viewBox="0 0 479 15">
<text x="13.2" y="11" text-anchor="middle" font-family="Liberation Sans,sans-serif" font-size="10.500" fill="#222">12</text>
<text x="51.0" y="11" text-anchor="middle" font-family="Liberation Sans,sans-serif" font-size="10.500" fill="#222">10</text>
<text x="88.8" y="11" text-anchor="middle" font-family="Liberation Sans,sans-serif" font-size="10.500" fill="#222">8</text>
<text x="126.6" y="11" text-anchor="middle" font-family="Liberation Sans,sans-serif" font-size="10.500" fill="#222">6</text>
<text x="164.4" y="11" text-anchor="middle" font-family="Liberation Sans,sans-serif" font-size="10.500" fill="#222">4</text>
<text x="202.2" y="11" text-anchor="middle" font-family="Liberation Sans,sans-serif" font-size="10.500" fill="#222">2</text>
<text x="240.0" y="11" text-anchor="middle" font-family="Liberation Sans,sans-serif" font-size="10.500" fill="#222">0</text>
<text x="277.8" y="11" text-anchor="middle" font-family="Liberation Sans,sans-serif" font-size="10.500" fill="#222">2</text>
<text x="315.6" y="11" text-anchor="middle" font-family="Liberation Sans,sans-serif" font-size="10.500" fill="#222">4</text>
<text x="353.4" y="11" text-anchor="middle" font-family="Liberation Sans,sans-serif" font-size="10.500" fill="#222">6</text>
<text x="391.2" y="11" text-anchor="middle" font-family="Liberation Sans,sans-serif" font-size="10.500" fill="#222">8</text>
<text x="429.0" y="11" text-anchor="middle" font-family="Liberation Sans,sans-serif" font-size="10.500" fill="#222">10</text>
<text x="466.8" y="11" text-anchor="middle" font-family="Liberation Sans,sans-serif" font-size="10.500" fill="#222">12</text>
<path d="M4.5 5v5M23.5 5v5M32.5 5v5M42.5 5v5M60.5 5v5M70.5 5v5M79.5 5v5M98.5 5v5M108.5 5v5M117.5 5v5M136.5 5v5M146.5 5v5M155.5 5v5M174.5 5v5M183.5 5v5M193.5 5v5M212.5 5v5M221.5 5v5M231.5 5v5M249.5 5v5M259.5 5v5M268.5 5v5M287.5 5v5M297.5 5v5M306.5 5v5M325.5 5v5M334.5 5v5M344.5 5v5M363.5 5v5M372.5 5v5M382.5 5v5M401.5 5v5M410.5 5v5M420.5 5v5M438.5 5v5M448.5 5v5M457.5 5v5M476.5 5v5" stroke="#333" stroke-width="1"/><path d="M9.5 7v2M18.5 7v2M27.5 7v2M37.5 7v2M46.5 7v2M56.5 7v2M65.5 7v2M75.5 7v2M84.5 7v2M94.5 7v2M103.5 7v2M112.5 7v2M122.5 7v2M131.5 7v2M141.5 7v2M150.5 7v2M160.5 7v2M169.5 7v2M179.5 7v2M188.5 7v2M197.5 7v2M207.5 7v2M216.5 7v2M226.5 7v2M235.5 7v2M245.5 7v2M254.5 7v2M264.5 7v2M273.5 7v2M283.5 7v2M292.5 7v2M301.5 7v2M311.5 7v2M320.5 7v2M330.5 7v2M339.5 7v2M349.5 7v2M358.5 7v2M368.5 7v2M377.5 7v2M386.5 7v2M396.5 7v2M405.5 7v2M415.5 7v2M424.5 7v2M434.5 7v2M443.5 7v2M453.5 7v2M462.5 7v2M471.5 7v2" stroke="#333" stroke-width="1"/>
</svg>
<div class="a" style="left:169px;top:241px;width:15px;height:360px;background:#f2f2f2;border:1px solid #262626"></div>
<svg style="left:170px;top:241px" width="14" height="360" viewBox="0 0 14 360">
<text transform="translate(10.500 28.8) rotate(-90)" text-anchor="middle" font-family="Liberation Sans,sans-serif" font-size="10.500" fill="#222">8</text>
<text transform="translate(10.500 66.6) rotate(-90)" text-anchor="middle" font-family="Liberation Sans,sans-serif" font-size="10.500" fill="#222">6</text>
<text transform="translate(10.500 104.4) rotate(-90)" text-anchor="middle" font-family="Liberation Sans,sans-serif" font-size="10.500" fill="#222">4</text>
<text transform="translate(10.500 142.2) rotate(-90)" text-anchor="middle" font-family="Liberation Sans,sans-serif" font-size="10.500" fill="#222">2</text>
<text transform="translate(10.500 180.0) rotate(-90)" text-anchor="middle" font-family="Liberation Sans,sans-serif" font-size="10.500" fill="#222">0</text>
<text transform="translate(10.500 217.8) rotate(-90)" text-anchor="middle" font-family="Liberation Sans,sans-serif" font-size="10.500" fill="#222">2</text>
<text transform="translate(10.500 255.6) rotate(-90)" text-anchor="middle" font-family="Liberation Sans,sans-serif" font-size="10.500" fill="#222">4</text>
<text transform="translate(10.500 293.4) rotate(-90)" text-anchor="middle" font-family="Liberation Sans,sans-serif" font-size="10.500" fill="#222">6</text>
<text transform="translate(10.500 331.2) rotate(-90)" text-anchor="middle" font-family="Liberation Sans,sans-serif" font-size="10.500" fill="#222">8</text>
<path d="M4 10.5h5M4 19.5h5M4 38.5h5M4 48.5h5M4 57.5h5M4 76.5h5M4 86.5h5M4 95.5h5M4 114.5h5M4 123.5h5M4 133.5h5M4 152.5h5M4 161.5h5M4 171.5h5M4 189.5h5M4 199.5h5M4 208.5h5M4 227.5h5M4 237.5h5M4 246.5h5M4 265.5h5M4 274.5h5M4 284.5h5M4 303.5h5M4 312.5h5M4 322.5h5M4 341.5h5M4 350.5h5" stroke="#333" stroke-width="1"/><path d="M6 5.5h2M6 15.5h2M6 24.5h2M6 34.5h2M6 43.5h2M6 52.5h2M6 62.5h2M6 71.5h2M6 81.5h2M6 90.5h2M6 100.5h2M6 109.5h2M6 119.5h2M6 128.5h2M6 137.5h2M6 147.5h2M6 156.5h2M6 166.5h2M6 175.5h2M6 185.5h2M6 194.5h2M6 204.5h2M6 213.5h2M6 223.5h2M6 232.5h2M6 241.5h2M6 251.5h2M6 260.5h2M6 270.5h2M6 279.5h2M6 289.5h2M6 298.5h2M6 308.5h2M6 317.5h2M6 326.5h2M6 336.5h2M6 345.5h2M6 355.5h2" stroke="#333" stroke-width="1"/>
</svg>
<style>
#ws{left:193px;top:170px;width:815px;height:502px;background:linear-gradient(#4e4e4e 0,#474747 30%,#404040 55%,#393939 79%,#2d2d2d 88%,#202020 96%,#1a1a1a 100%);overflow:hidden}
#slide{left:360px;top:241px;width:480px;height:360px;background:#5c634b;box-shadow:2px 2px 4px rgba(0,0,0,.55);overflow:hidden}
.sl{position:absolute;text-align:center;font-family:"Liberation Serif",serif;font-size:22.500px;line-height:26px;color:#ac0808;text-shadow:.6px .8px .8px rgba(50,10,0,.5);white-space:nowrap;-webkit-text-stroke:.3px #ac0808}
.sq{text-decoration:none}
#rsb{left:1008px;top:170px;width:16px;height:502px;background:#3f3f3f;border-left:1px solid #5a5a5a;border-right:1px solid #4c4c4c}
</style>
<div class="a" id="ws">
<svg style="left:0;top:0" width="140" height="40" viewBox="0 0 140 40"><path d="M0 0h128Q60 12 0 33.500z" fill="#7f7f7f"/><path d="M0 33.500Q60 12 128 0h5Q62 13.500 0 35.500z" fill="#8b8b8b"/></svg>
</div>
<div class="a" id="slide">
<svg style="left:0;top:0" width="480" height="360" viewBox="0 0 480 360">
<defs>
<filter id="rough" x="-5%" y="-5%" width="110%" height="110%"><feTurbulence type="fractalNoise" baseFrequency=".03" numOctaves="4" seed="4" result="n"/><feDisplacementMap in="SourceGraphic" in2="n" scale="6" xChannelSelector="R" yChannelSelector="G"/></filter>
<filter id="rough2" x="-5%" y="-5%" width="110%" height="110%"><feTurbulence type="fractalNoise" baseFrequency=".03" numOctaves="4" seed="4" result="n"/><feDisplacementMap in="SourceGraphic" in2="n" scale="6" xChannelSelector="R" yChannelSelector="G"/><feGaussianBlur stdDeviation="2.500"/></filter>
<filter id="grain" x="0" y="0" width="100%" height="100%"><feTurbulence type="fractalNoise" baseFrequency=".7" numOctaves="3" seed="7"/><feColorMatrix values="0 0 0 0 0  0 0 0 0 0  0 0 0 0 0  0 0 0 .10 0"/></filter>
<filter id="grain2" x="0" y="0" width="100%" height="100%"><feTurbulence type="fractalNoise" baseFrequency=".06" numOctaves="3" seed="11"/><feColorMatrix values="0 0 0 0 0  0 0 0 0 0  0 0 0 0 0  0 0 0 .05 -.005"/></filter>
<filter id="grain3" x="0" y="0" width="100%" height="100%"><feTurbulence type="fractalNoise" baseFrequency=".18" numOctaves="3" seed="3"/><feColorMatrix values="0 0 0 0 0  0 0 0 0 0  0 0 0 0 0  0 0 0 .32 -.06"/></filter>
<radialGradient id="pg" cx=".5" cy=".42" r=".72"><stop offset="0" stop-color="#9fa395"/><stop offset=".55" stop-color="#989c8d"/><stop offset="1" stop-color="#858979"/></radialGradient>
</defs>
<rect width="480" height="360" fill="#646b52"/><rect width="480" height="360" filter="url(#grain3)"/>
<path d="M5 6H476V349Q300 357 240 355Q150 354 5 352Z" fill="#4a503b" filter="url(#rough2)"/>
<path d="M7 8H473V348Q300 353 240 351Q150 352 7 351Z" fill="#70775f" filter="url(#rough)"/>
<path d="M16 10H471V345Q300 351 240 350Q150 348 16 343Z" fill="url(#pg)" filter="url(#rough)"/>
<rect width="480" height="360" filter="url(#grain2)"/>
<rect width="480" height="360" filter="url(#grain)"/>
</svg>
</div>
<div class="a" style="left:434px;top:427px;width:160px;height:1px;background:linear-gradient(90deg,rgba(255,255,255,0),#e4e4e4 30%,#f2f2f2)"></div>
<div class="a" style="left:604px;top:427px;width:160px;height:1px;background:linear-gradient(270deg,rgba(255,255,255,0),#e4e4e4 30%,#f2f2f2)"></div>
<div class="a" style="left:596px;top:425px;width:5px;height:5px;border-radius:50%;background:#e8962e"></div>
<!--ST-->
<div class="sl" style="left:366.6px;width:470.4px;top:270.2px;letter-spacing:-0.596px">Коментар (<span class="sq">лат.-</span> тлумачення) –</div>
<div class="sl" style="left:326.2px;width:552.3px;top:295.8px;letter-spacing:-0.444px">публіцистичний жанр, побудований за</div>
<div class="sl" style="left:314.0px;width:574.5px;top:321.4px;letter-spacing:-0.918px">методом “<span class="sq">від</span> факту до <span class="sq">узагальнення</span>”, “ від</div>
<div class="sl" style="left:332.6px;width:539.1px;top:347.0px;letter-spacing:-0.853px">факту до <span class="sq">прогнозу</span>”. В коментарі автор</div>
<div class="sl" style="left:305.0px;width:593.6px;top:372.6px;letter-spacing:-0.546px">розповідає читачеві про своє <span class="sq">баченя</span> явищ з</div>
<div class="sl" style="left:292.0px;width:619.6px;top:398.2px;letter-spacing:-0.574px">найрізноманітніших сфер життя. Коментувати</div>
<div class="sl" style="left:294.7px;width:612.7px;top:423.8px;letter-spacing:-0.673px">можна як політичні так і спортивні, мистецькі</div>
<div class="sl" style="left:414.6px;width:375.4px;top:449.4px;letter-spacing:-0.769px">чи економічні події.</div>
<!--/ST-->
<!--SQ--><svg style="left:0;top:0" width="1024" height="768" viewBox="0 0 1024 768"><path d="M566.1 293.7L568.1 291.9L570.1 293.7L572.1 291.9L574.1 293.7L576.1 291.9L578.1 293.7L580.1 291.9L582.1 293.7L584.1 291.9L586.1 293.7L588.1 291.9L590.1 293.7L592.1 291.9L594.1 293.7L596.1 291.9L598.1 293.7L600.1 291.9L602.1 293.7L604.1 291.9L606.1 293.7M502.2 344.9L504.2 343.1L506.2 344.9L508.2 343.1L510.2 344.9L512.2 343.1L514.2 344.9L516.2 343.1L518.2 344.9L520.2 343.1L522.2 344.9L524.2 343.1L526.2 344.9L528.2 343.1M614.2 344.9L616.2 343.1L618.2 344.9L620.2 343.1L622.2 344.9L624.2 343.1L626.2 344.9L628.2 343.1L630.2 344.9L632.2 343.1L634.2 344.9L636.2 343.1L638.2 344.9L640.2 343.1L642.2 344.9L644.2 343.1L646.2 344.9L648.2 343.1L650.2 344.9L652.2 343.1L654.2 344.9L656.2 343.1L658.2 344.9L660.2 343.1L662.2 344.9L664.2 343.1L666.2 344.9L668.2 343.1L670.2 344.9L672.2 343.1L674.2 344.9L676.2 343.1L678.2 344.9L680.2 343.1L682.2 344.9L684.2 343.1L686.2 344.9L688.2 343.1L690.2 344.9L692.2 343.1L694.2 344.9L696.2 343.1L698.2 344.9L700.2 343.1L702.2 344.9L704.2 343.1L706.2 344.9L708.2 343.1L710.2 344.9L712.2 343.1L714.2 344.9L716.2 343.1L718.2 344.9L720.2 343.1L722.2 344.9L724.2 343.1L726.2 344.9L728.2 343.1L730.2 344.9L732.2 343.1M514.8 370.5L516.8 368.7L518.8 370.5L520.8 368.7L522.8 370.5L524.8 368.7L526.8 370.5L528.8 368.7L530.8 370.5L532.8 368.7L534.8 370.5L536.8 368.7L538.8 370.5L540.8 368.7L542.8 370.5L544.8 368.7L546.8 370.5L548.8 368.7L550.8 370.5L552.8 368.7L554.8 370.5L556.8 368.7L558.8 370.5L560.8 368.7L562.8 370.5L564.8 368.7L566.8 370.5L568.8 368.7L570.8 370.5L572.8 368.7L574.8 370.5L576.8 368.7L578.8 370.5L580.8 368.7L582.8 370.5L584.8 368.7L586.8 370.5L588.8 368.7L590.8 370.5L592.8 368.7L594.8 370.5M671.0 396.1L673.0 394.3L675.0 396.1L677.0 394.3L679.0 396.1L681.0 394.3L683.0 396.1L685.0 394.3L687.0 396.1L689.0 394.3L691.0 396.1L693.0 394.3L695.0 396.1L697.0 394.3L699.0 396.1L701.0 394.3L703.0 396.1L705.0 394.3L707.0 396.1L709.0 394.3L711.0 396.1L713.0 394.3L715.0 396.1L717.0 394.3L719.0 396.1L721.0 394.3L723.0 396.1L725.0 394.3L727.0 396.1L729.0 394.3L731.0 396.1L733.0 394.3" fill="none" stroke="#f2d0d0" stroke-width="1.800" opacity=".55"/><path d="M566.1 293.7L568.1 291.9L570.1 293.7L572.1 291.9L574.1 293.7L576.1 291.9L578.1 293.7L580.1 291.9L582.1 293.7L584.1 291.9L586.1 293.7L588.1 291.9L590.1 293.7L592.1 291.9L594.1 293.7L596.1 291.9L598.1 293.7L600.1 291.9L602.1 293.7L604.1 291.9L606.1 293.7M502.2 344.9L504.2 343.1L506.2 344.9L508.2 343.1L510.2 344.9L512.2 343.1L514.2 344.9L516.2 343.1L518.2 344.9L520.2 343.1L522.2 344.9L524.2 343.1L526.2 344.9L528.2 343.1M614.2 344.9L616.2 343.1L618.2 344.9L620.2 343.1L622.2 344.9L624.2 343.1L626.2 344.9L628.2 343.1L630.2 344.9L632.2 343.1L634.2 344.9L636.2 343.1L638.2 344.9L640.2 343.1L642.2 344.9L644.2 343.1L646.2 344.9L648.2 343.1L650.2 344.9L652.2 343.1L654.2 344.9L656.2 343.1L658.2 344.9L660.2 343.1L662.2 344.9L664.2 343.1L666.2 344.9L668.2 343.1L670.2 344.9L672.2 343.1L674.2 344.9L676.2 343.1L678.2 344.9L680.2 343.1L682.2 344.9L684.2 343.1L686.2 344.9L688.2 343.1L690.2 344.9L692.2 343.1L694.2 344.9L696.2 343.1L698.2 344.9L700.2 343.1L702.2 344.9L704.2 343.1L706.2 344.9L708.2 343.1L710.2 344.9L712.2 343.1L714.2 344.9L716.2 343.1L718.2 344.9L720.2 343.1L722.2 344.9L724.2 343.1L726.2 344.9L728.2 343.1L730.2 344.9L732.2 343.1M514.8 370.5L516.8 368.7L518.8 370.5L520.8 368.7L522.8 370.5L524.8 368.7L526.8 370.5L528.8 368.7L530.8 370.5L532.8 368.7L534.8 370.5L536.8 368.7L538.8 370.5L540.8 368.7L542.8 370.5L544.8 368.7L546.8 370.5L548.8 368.7L550.8 370.5L552.8 368.7L554.8 370.5L556.8 368.7L558.8 370.5L560.8 368.7L562.8 370.5L564.8 368.7L566.8 370.5L568.8 368.7L570.8 370.5L572.8 368.7L574.8 370.5L576.8 368.7L578.8 370.5L580.8 368.7L582.8 370.5L584.8 368.7L586.8 370.5L588.8 368.7L590.8 370.5L592.8 368.7L594.8 370.5M671.0 396.1L673.0 394.3L675.0 396.1L677.0 394.3L679.0 396.1L681.0 394.3L683.0 396.1L685.0 394.3L687.0 396.1L689.0 394.3L691.0 396.1L693.0 394.3L695.0 396.1L697.0 394.3L699.0 396.1L701.0 394.3L703.0 396.1L705.0 394.3L707.0 396.1L709.0 394.3L711.0 396.1L713.0 394.3L715.0 396.1L717.0 394.3L719.0 396.1L721.0 394.3L723.0 396.1L725.0 394.3L727.0 396.1L729.0 394.3L731.0 396.1L733.0 394.3" fill="none" stroke="#d8141c" stroke-width=".9"/></svg>
<!--/SQ-->
<!-- right scrollbar -->
<div class="a" id="rsb"></div>
<svg style="left:1011px;top:174px" width="11" height="6" viewBox="0 0 11 6"><path d="M0 5.500L5.500.5 11 5.500z" fill="#c4c4c4"/></svg>
<div class="a" style="left:1009px;top:299px;width:14px;height:34px;border-radius:2px;background:linear-gradient(90deg,#fdfdfd,#efeff0 50%,#c9c9cd);border:1px solid #8a8a8a"></div>
<svg style="left:1013px;top:313px" width="8" height="9" viewBox="0 0 8 9"><path d="M0 .5h8M0 2.500h8M0 4.500h8M0 6.500h8" stroke="#8a8a8a"/></svg>
<svg style="left:1011px;top:614px" width="11" height="6" viewBox="0 0 11 6"><path d="M0 .5L5.500 5.500 11 .5z" fill="#c4c4c4"/></svg>
<div class="a" style="left:1008px;top:625px;width:16px;height:47px;background:#7d7d7d;border-top:1px solid #d0d0d0"></div>
<svg style="left:1012px;top:630px" width="9" height="26" viewBox="0 0 9 26"><path d="M0 4L4.500 0 9 4zM0 9l4.500-4L9 9zM0 17l4.500 4L9 17zM0 22l4.500 4L9 22z" fill="#111"/></svg>
<!--/WORK-->
<!--BOTTOM-->
<style>
#nsep{left:165px;top:672px;width:859px;height:7px;background:linear-gradient(#6a6d72 0,#c9cdd2 1.500px,#dfe2e6 3px,#c9cdd2 5px,#5a5c60 6px,#5a5c60 7px)}
#notes{left:165px;top:679px;width:843px;height:37px;background:#fff;border-left:1px solid #8a8a8a}
#nsb{left:1008px;top:679px;width:16px;height:37px;background:#3f3f3f;border-left:1px solid #5a5a5a;border-right:1px solid #4c4c4c}
#sb{left:0;top:716px;width:1024px;height:22px;background:linear-gradient(#46474a 0,#3b3c3f 45%,#28292b 55%,#202123 100%);border-top:1px solid #5a5a5a}
.st{position:absolute;top:720px;color:#fff;font-size:12px;line-height:14px;white-space:nowrap;letter-spacing:-.2px}
.ss{position:absolute;top:717px;width:1px;height:20px;background:#111;box-shadow:1px 0 0 #555}
#tk{left:0;top:738px;width:1024px;height:30px;background:linear-gradient(#74767a 0,#4d4f53 1.500px,#45474b 3px,#2c2e31 14px,#07080b 15px,#0b0c0f 100%)}
.tkb{position:absolute;top:740px;height:27px;width:122px;border:1px solid #000;border-radius:3px;background:linear-gradient(#4a4c50,#2c2e31 48%,#0d0d0e 52%,#1a1b1d);box-shadow:inset 0 0 0 1px rgba(255,255,255,.18);color:#fff;font-size:12px;line-height:25px;padding-left:26px;white-space:nowrap;overflow:hidden;letter-spacing:-.15px}
</style>
<div class="a" id="nsep"></div>
<div class="a" id="notes"></div>
<div class="a" style="left:174.500px;top:687px;font-size:15.500px;line-height:18px;color:#111;white-space:nowrap;letter-spacing:.06px;transform:scaleY(1.15);transform-origin:0 14px">Заметки к слайду</div>
<div class="a" id="nsb"></div>
<svg style="left:1011px;top:682px" width="11" height="6" viewBox="0 0 11 6"><path d="M0 5.500L5.500.5 11 5.500z" fill="#7e9088"/></svg>
<svg style="left:1011px;top:705px" width="11" height="6" viewBox="0 0 11 6"><path d="M0 .5L5.500 5.500 11 .5z" fill="#7e9088"/></svg>
<div class="a" id="sb"></div>
<div class="st" style="left:8px;letter-spacing:-0.56px">Слайд 4 из 12</div><div class="ss" style="left:88px"></div>
<div class="st" style="left:97px;letter-spacing:-0.37px">"Бумажная"</div><div class="ss" style="left:166px"></div>
<div class="st" style="left:176px;letter-spacing:0px">русский</div><div class="ss" style="left:227px"></div>
<div class="a" style="left:762px;top:717px;width:262px;height:21px;background:linear-gradient(#5e6166 0,#505358 45%,#3c3e42 55%,#404246 100%)"></div><div class="ss" style="left:761px"></div>
<div class="a" style="left:766px;top:718px;width:57px;height:18px;border-radius:3px;background:linear-gradient(#e9e9e9,#bdbdbd);border:1px solid #6e6e6e"></div>
<div class="a" style="left:784px;top:719px;width:1px;height:16px;background:#8a8a8a"></div><div class="a" style="left:803px;top:719px;width:1px;height:16px;background:#8a8a8a"></div>
<svg style="left:770px;top:721px" width="12" height="12" viewBox="0 0 12 12"><rect x=".5" y=".5" width="10" height="10" fill="#f4f4f4" stroke="#444"/><path d="M4 .5v10M4 6h6.500" stroke="#444"/></svg>
<svg style="left:788px;top:721px" width="12" height="12" viewBox="0 0 12 12"><rect x=".5" y=".5" width="4" height="4" fill="#f4f4f4" stroke="#555"/><rect x="6.500" y=".5" width="4" height="4" fill="#f4f4f4" stroke="#555"/><rect x=".5" y="6.500" width="4" height="4" fill="#f4f4f4" stroke="#555"/><rect x="6.500" y="6.500" width="4" height="4" fill="#f4f4f4" stroke="#555"/></svg>
<svg style="left:807px;top:721px" width="12" height="12" viewBox="0 0 12 12"><rect x=".5" y=".5" width="11" height="6.500" fill="#f4f4f4" stroke="#444"/><path d="M6 7v3M3 10.500h6" stroke="#444"/></svg>
<div class="st" style="left:830px;color:#c4c8d0;letter-spacing:-0.6px">50%</div>
<div class="a" style="left:872px;top:727px;width:110px;height:1px;background:#bdbdbd"></div>
<div class="a" style="left:929px;top:723px;width:1px;height:9px;background:#bdbdbd"></div>
<svg style="left:861px;top:720px" width="14" height="14" viewBox="0 0 14 14"><circle cx="7" cy="7" r="6" fill="#d9d9d9" stroke="#f4f4f4"/><path d="M3.500 7h7" stroke="#444" stroke-width="1.600"/></svg>
<svg style="left:979px;top:720px" width="14" height="14" viewBox="0 0 14 14"><circle cx="7" cy="7" r="6" fill="#d9d9d9" stroke="#f4f4f4"/><path d="M3.500 7h7M7 3.500v7" stroke="#444" stroke-width="1.600"/></svg>
<svg style="left:898px;top:721px" width="8" height="12" viewBox="0 0 8 12"><path d="M.5.500h7v7L4 11 .5 7.500z" fill="#e4e4e4" stroke="#555"/></svg>
<svg style="left:1003px;top:719px" width="16" height="16" viewBox="0 0 16 16"><rect x=".5" y=".5" width="15" height="15" rx="2" fill="#d4d4d4" stroke="#f0f0f0"/><path d="M8 2.500v11M2.500 8h11M4 4l8 8M12 4l-8 8" stroke="#666" stroke-width="1" stroke-dasharray="2 1.500"/></svg>
<!-- taskbar -->
<div class="a" id="tk"></div>
<svg style="left:3px;top:733px" width="42" height="35" viewBox="0 0 42 35"><defs><radialGradient id="so" cx=".5" cy=".75" r=".8"><stop offset="0" stop-color="#58c0f4"/><stop offset=".45" stop-color="#1f6fbe"/><stop offset=".8" stop-color="#0b3a7e"/><stop offset="1" stop-color="#061c44"/></radialGradient><linearGradient id="sg" x1="0" y1="0" x2="0" y2="1"><stop offset="0" stop-color="#fff" stop-opacity=".55"/><stop offset="1" stop-color="#fff" stop-opacity=".05"/></linearGradient></defs><circle cx="20.500" cy="22" r="19" fill="#05070c"/><circle cx="20.500" cy="22" r="17.300" fill="url(#so)"/><path d="M5 17a16.500 16.500 0 0 1 31 0Q20 24 5 17z" fill="url(#sg)"/><path d="M10.500 14c3-1.800 6-1.800 9 0l-1.800 7c-3-1.800-6-1.800-9 0z" fill="#ec5a2c"/><path d="M21 14.500c3 1.800 6 1.800 9 0l-1.800 7c-3 1.800-6 1.800-9 0z" fill="#82c643"/><path d="M8.300 23c3-1.800 6-1.800 9 0l-1.800 7c-3-1.800-6-1.800-9 0z" fill="#3f9fee"/><path d="M18.800 23.500c3 1.800 6 1.800 9 0l-1.800 7c-3 1.800-6 1.800-9 0z" fill="#fac92e"/></svg>
<svg style="left:56px;top:745px" width="16" height="16" viewBox="0 0 16 16"><path d="M.5.500h13l2 2v13H.5z" fill="#2a52c8" stroke="#16307a"/><rect x="3" y="1" width="8" height="5" fill="#f2f2f6"/><rect x="2.500" y="8.500" width="11" height="6.500" fill="#fff"/><path d="M3 10.500h10M3 13h10" stroke="#e0242c" stroke-width="1.400"/></svg>
<svg style="left:80px;top:745px" width="16" height="16" viewBox="0 0 16 16"><circle cx="8" cy="8" r="7.500" fill="#1a1a1a"/><circle cx="8" cy="8" r="6" fill="#f3a81c"/><path d="M4.500 11.500L8 4l3.500 7.500M6 9.500h4" stroke="#3a2600" stroke-width="1.500" fill="none"/></svg>
<svg style="left:102px;top:743px" width="18" height="18" viewBox="0 0 18 18"><text x="1.500" y="16.500" font-family="Liberation Sans,sans-serif" font-weight="bold" font-size="20" fill="#2f96ee" stroke="#2f96ee" stroke-width=".6">e</text><path d="M1 15.500C1.500 7 12 0 17 3.500M3 17c-2.500 0 -2-3 0-5" stroke="#f0bc18" stroke-width="1.600" fill="none"/></svg>
<svg style="left:125px;top:746px" width="17" height="15" viewBox="0 0 17 15"><rect x=".5" y=".5" width="16" height="13" fill="#3f7fd6" stroke="#c9d6ea"/><rect x="2" y="2" width="13" height="8" fill="#6aa6ee"/><rect x="1" y="11" width="15" height="2.500" fill="#222"/></svg>
<div class="a" style="left:153px;top:744px;color:#fff;font-size:13px;font-weight:bold;line-height:16px">›</div>
<div class="tkb" style="left:170px;letter-spacing:-0.05px">методичка жу...</div>
<div class="tkb" style="left:294px;letter-spacing:-0.12px">проект школи...</div>
<div class="tkb" style="left:418px;letter-spacing:-0.13px">OKSANA K (I:)</div>
<div class="tkb" style="left:542px;letter-spacing:-0.18px">атестаційна п...</div>
<div class="tkb" style="left:666px;width:124px;background:linear-gradient(#2c2c2e,#141415 48%,#000 52%,#0d0d0e);box-shadow:inset 0 0 0 1px rgba(255,255,255,.3);letter-spacing:-0.12px">Microsoft Powe...</div>
<svg style="left:177px;top:746px" width="17" height="16" viewBox="0 0 17 16"><path d="M3.500.5h9l3 3v12h-12z" fill="#f4f6fb" stroke="#8a99b8"/><rect x=".5" y="2.500" width="10" height="9" fill="#2a56b4" stroke="#9ab0e0"/><text x="5.500" y="10" text-anchor="middle" font-family="Liberation Sans,sans-serif" font-weight="bold" font-size="8" fill="#fff">W</text></svg>
<svg style="left:301px;top:746px" width="17" height="16" viewBox="0 0 17 16"><path d="M3.500.5h9l3 3v12h-12z" fill="#f4f6fb" stroke="#8a99b8"/><rect x=".5" y="2.500" width="10" height="9" fill="#2a56b4" stroke="#9ab0e0"/><text x="5.500" y="10" text-anchor="middle" font-family="Liberation Sans,sans-serif" font-weight="bold" font-size="8" fill="#fff">W</text></svg>
<svg style="left:426px;top:747px" width="16" height="14" viewBox="0 0 16 14"><rect x=".5" y=".5" width="15" height="13" rx="1.500" fill="#3a9af0" stroke="#8cc8ff"/><path d="M3 7h9M10 5l2.500 2L10 9M6 4.500v5" stroke="#fff" stroke-width="1.200" fill="none"/></svg>
<svg style="left:550px;top:746px" width="16" height="15" viewBox="0 0 16 15"><path d="M1 5l8-4 6 3-2 9-9 1.500z" fill="#5cc81c" stroke="#2a7a0a"/><path d="M5 2.500l3-1.800 2 1" stroke="#e8e83a" stroke-width="1.500" fill="none"/></svg>
<svg style="left:673px;top:745px" width="18" height="17" viewBox="0 0 18 17"><rect x="2.500" y="1.500" width="15" height="14" rx="2" fill="#f0f0f0" stroke="#e85a1c" stroke-width="1.500"/><rect x=".5" y="4.500" width="12" height="11" rx="2" fill="#e8501c" stroke="#fbd0b8"/><circle cx="7" cy="10.500" r="3" fill="none" stroke="#fff" stroke-width="1.500"/></svg>
<div class="a" style="left:798px;top:744px;width:20px;height:17px;background:#bdbdbd;color:#111;font-size:11px;line-height:17px;text-align:center;letter-spacing:-.3px">EN</div>
<div class="a" style="left:822px;top:745px;width:1px;height:14px;background:#000;box-shadow:1px 0 0 #333"></div>
<svg style="left:838px;top:744px" width="90" height="18" viewBox="0 0 90 18">
<path d="M2 8l6-5v3h8v5H8v3z" fill="#3ad04a" stroke="#0a6a1a" stroke-width=".7"/><rect x="8" y="11" width="9" height="5" fill="#d0d4d8" stroke="#555" stroke-width=".6"/>
<path d="M22 7h3l5-4v12l-5-4h-3z" fill="#e8a060" stroke="#7a3a10" stroke-width=".7"/><path d="M32 5c2 2 2 6 0 8" stroke="#c85a2a" fill="none" stroke-width="1.200"/>
<rect x="38" y="3" width="9" height="7" fill="#e8a0a0" stroke="#555" stroke-width=".7"/><rect x="42" y="6" width="9" height="7" fill="#d06060" stroke="#555" stroke-width=".7"/><path d="M46 10l6 6M52 10l-6 6" stroke="#e01010" stroke-width="1.500"/>
<ellipse cx="61" cy="9" rx="5" ry="7" transform="rotate(35 61 9)" fill="#f4f4f4" stroke="#555" stroke-width=".7"/><text x="55" y="15" font-family="Liberation Sans,sans-serif" font-size="7" fill="#e01010">6</text>
<rect x="69" y="5" width="16" height="11" rx="1.500" fill="#1cd02a" stroke="#0a4a10"/><rect x="70" y="3" width="14" height="3" fill="#444"/>
</svg>
<svg style="left:924px;top:744px" width="64" height="18" viewBox="0 0 64 18">
<path d="M1 8l8-7 8 7z" fill="#e81c1c" stroke="#fff" stroke-width=".8"/><path d="M9 8v8M5.500 12.500L9 16l3.500-3.500" stroke="#fff" stroke-width="1.500" fill="none"/>
<path d="M22 6l8-3 8 4v6l-8 3-8-4z" fill="#e8c84a" stroke="#8a6a10" stroke-width=".7"/><path d="M22 6l8 4 8-3M30 10v6" stroke="#8a6a10" stroke-width=".7" fill="none"/><path d="M24 3l6 2" stroke="#7ac0f0" stroke-width="2"/>
<circle cx="52" cy="9" r="7" fill="#2a6ad0" stroke="#8ab0f0"/><text x="52" y="13" text-anchor="middle" font-family="Liberation Serif,serif" font-weight="bold" font-size="12" fill="#fff">a</text>
</svg>
<div class="a" style="left:991px;top:746px;color:#fff;font-size:11.500px;line-height:14px;letter-spacing:-.2px">0:06</div>
<!-- tooltip -->
<div class="a" style="left:99px;top:500px;width:177px;height:19px;background:linear-gradient(#fff,#e4e6f0);border:1px solid #767676;border-radius:3px;box-shadow:1px 2px 2px rgba(0,0,0,.45);font-size:12px;line-height:17px;color:#4c4c5e;padding-left:3px;white-space:nowrap;letter-spacing:-.34px">Коментар (лат.- тлумачення) – ...</div>
<!--/BOTTOM-->
</div></body></html>
